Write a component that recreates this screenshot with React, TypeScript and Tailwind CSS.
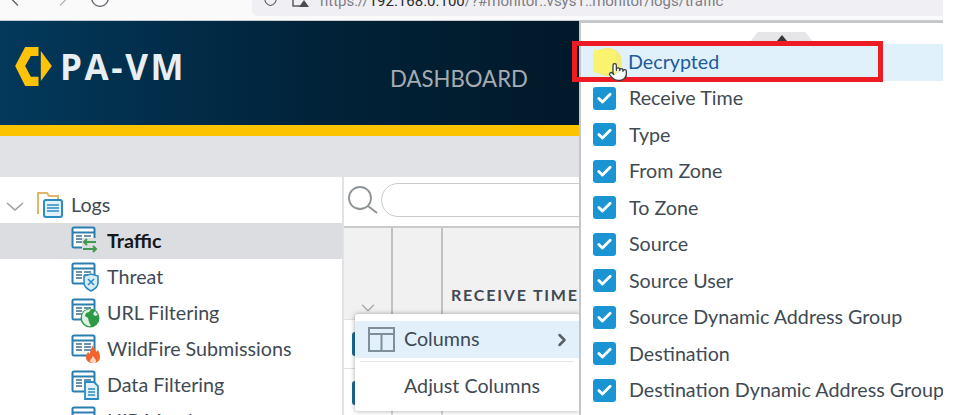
import React from 'react';
import { ChevronLeft, ChevronRight, ChevronDown, Check, Circle, Shield, Pointer } from 'lucide-react';

const columns = [
  'Receive Time',
  'Type',
  'From Zone',
  'To Zone',
  'Source',
  'Source User',
  'Source Dynamic Address Group',
  'Destination',
  'Destination Dynamic Address Group',
];

const LogIcon: React.FC<{ children?: React.ReactNode }> = ({ children }) => (
  <svg width="30" height="30" viewBox="0 0 30 30" className="shrink-0" fill="none">
    <rect x="1.5" y="1.5" width="22" height="20" rx="1.5" fill="#fff" stroke="#2b7fb0" strokeWidth="2" />
    <path d="M2 6.5h21" stroke="#2b7fb0" strokeWidth="2" />
    <path d="M5 10h6M5 13h6M5 16h6M13 10h7M13 13h7M13 16h7" stroke="#3d6f90" strokeWidth="1.6" />
    {children}
  </svg>
);

const navItems: { label: string; active?: boolean; badge: React.ReactNode }[] = [
  {
    label: 'Traffic',
    active: true,
    badge: (
      <g>
        <rect x="11" y="12" width="15" height="16" fill="#dcdde0" />
        <g stroke="#3f9b4d" strokeWidth="2" fill="none">
          <path d="M25 16H13M16 13l-3 3 3 3" />
          <path d="M12 23h13M22 20l3 3-3 3" />
        </g>
      </g>
    ),
  },
  {
    label: 'Threat',
    badge: (
      <g>
        <path d="M13 14l7-2 7 2v7c0 3-3 6-7 8-4-2-7-5-7-8z" fill="#d8ecf7" stroke="#2b8cc4" strokeWidth="1.6" />
        <path d="M17 17l6 6M23 17l-6 6" stroke="#2b8cc4" strokeWidth="1.6" />
      </g>
    ),
  },
  {
    label: 'URL Filtering',
    badge: (
      <g>
        <circle cx="19" cy="20" r="9.5" fill="#2f9a45" />
        <path d="M12 15c2-3 5-4 8-4l-2 3-3 1-1 3 3 2 1 4 2 4c-4 1-9-3-9-8 0-2 0-3 1-5zM24 13l3 4-3 1-2-2z" fill="#dff0e3" />
      </g>
    ),
  },
  {
    label: 'WildFire Submissions',
    badge: (
      <g>
        <path d="M21 11c1 3 4 4 4 7l2-2c1.500 3 2 5 2 7 0 4-3 6-7 6s-7-2-7-6c0-2 1-3 2-5l2 2c0-4 2-5 2-9z" fill="#f0642d" />
        <path d="M22 22c1 2 3 3 3 5s-1 2-3 2-3-1-3-2 2-3 3-5z" fill="#fbd6c4" />
      </g>
    ),
  },
  {
    label: 'Data Filtering',
    badge: (
      <g>
        <path d="M14 12h9l4 4v13H14z" fill="#e3f1fa" stroke="#2b8cc4" strokeWidth="1.8" />
        <path d="M17 19h7M17 22h7M17 25h7" stroke="#2b8cc4" strokeWidth="1.4" />
      </g>
    ),
  },
  { label: 'HIP Match', badge: null },
];

const Checkbox: React.FC = () => (
  <span className="flex h-[23px] w-[23px] shrink-0 items-center justify-center rounded-[3px] bg-[#1a94d2]">
    <Check size={17} strokeWidth={4} className="text-white" />
  </span>
);

const TableRow: React.FC = () => (
  <div className="flex h-[49px] border-t border-[#dfe0e2]">
    <div className="flex w-[49px] items-center border-r-2 border-[#d5d6d8] pl-[8px]">
      <span className="h-[24px] w-[23px] rounded-[3px] bg-[#1d6a96]" />
    </div>
    <div className="w-[50px] border-r-2 border-[#d5d6d8]" />
  </div>
);

const App: React.FC = () => {
  return (
    <div className="relative h-[415px] w-[958px] overflow-hidden bg-white font-['Lato',sans-serif] text-[#3f4a52]">
      <div className="flex h-[20px] w-[943px] overflow-hidden bg-[#fafafb]">
        <div className="flex h-[20px] w-[252px] items-start pl-[5px] text-[#5b5b66]">
          <ChevronLeft size={20} strokeWidth={1.5} className="-mt-[10px]" />
          <ChevronRight size={20} strokeWidth={1.5} className="-mt-[10px] ml-[28px] text-[#b4b4ba]" />
          <Circle size={20} strokeWidth={1.5} className="-mt-[12px] ml-[17px]" />
        </div>
        <div className="flex h-[16px] flex-1 items-start rounded-bl-[6px] bg-[#f0f0f4] pl-[10px] font-['Roboto',sans-serif] text-[15px] text-[#7d7d85]">
          <Shield size={17} strokeWidth={1.5} className="-mt-[10px] text-[#5b5b66]" />
          <svg width="17" height="7" viewBox="0 0 17 7" className="ml-[13px]">
            <path d="M1 0v6h7" fill="none" stroke="#5b5b66" strokeWidth="1.5" />
            <path d="M12 0l5 7H7z" fill="#4a4a50" />
          </svg>
          <span className="-mt-[10px] ml-[11px] whitespace-nowrap">
            https://<span className="text-[#2a2a2e]">192.168.0.100</span>/?#monitor::vsys1::monitor/logs/traffic
          </span>
        </div>
      </div>

      <div className="flex h-[105px] w-[943px] items-center border-t border-[#c9ccd0] bg-gradient-to-r from-[#03395c] via-[#012238] via-35% to-[#010d16]">
        <div className="flex w-[390px] items-center pb-[13px] pl-[15px]">
          <svg width="37" height="39" viewBox="45 143 110 117" fill="#fcc30a">
            <path d="M75 143h40v27H92l-17 30 17 32h23v28H75l-30-60z" />
            <path d="M122 155l33 45-33 45z" />
          </svg>
          <span className="ml-[8px] font-['Open_Sans',sans-serif] text-[35px] leading-none font-bold tracking-[2.6px] text-[#e8eef2]">
            PA-VM
          </span>
        </div>
        <span className="mt-[12px] text-[22.2px] text-[#a4acb2]">DASHBOARD</span>
      </div>
      <div className="h-[11px] w-[943px] bg-[#fcc400]" />
      <div className="h-[41px] w-[943px] bg-[#e1e2e5]" />

      <div className="flex h-[238px] w-[943px]">
        <aside className="w-[342px] shrink-0 bg-white pt-[10px]">
          <div className="flex h-[36px] items-center pl-[6px] text-[19.7px]">
            <svg width="18" height="9" viewBox="0 0 18 9" fill="none" stroke="#9aa1a6" strokeWidth="1.6" className="mt-[2px]">
              <path d="M1 1l8 7 8-7" />
            </svg>
            <svg width="28" height="30" viewBox="0 0 28 30" className="ml-[12px]" fill="none">
              <path d="M2 24V3h9l2 3h9v4" stroke="#e3b566" strokeWidth="2" fill="#fff" />
              <rect x="8" y="10" width="18" height="17" rx="2" fill="#e3f1fa" stroke="#2b8cc4" strokeWidth="2" />
              <path d="M11 15h12M11 18h12M11 21h12" stroke="#2b8cc4" strokeWidth="1.6" />
            </svg>
            <span className="ml-[7px]">Logs</span>
          </div>
          {navItems.map((item) => (
            <div
              key={item.label}
              className={`flex h-[36px] items-center pl-[71px] text-[19.7px] ${item.active ? 'bg-[#dcdde0] font-bold text-[#14181b]' : ''}`}
            >
              <LogIcon>{item.badge}</LogIcon>
              <span className="ml-[6px]">{item.label}</span>
            </div>
          ))}
        </aside>

        <main className="relative flex-1 overflow-hidden border-l-2 border-[#e1e2e5]">
          <div className="flex h-[51px] items-center gap-[3px] border-b-2 border-[#c8cacc] pb-[3px] pl-[3px]">
            <svg width="31" height="28" viewBox="0 0 31 28" fill="none" stroke="#8c9296" strokeWidth="1.8" className="shrink-0">
              <circle cx="13" cy="12" r="11" />
              <path d="M21 20l9 7" />
            </svg>
            <div className="h-[34px] flex-1 rounded-l-[17px] border border-[#c8cacc] bg-white" />
          </div>
          <div className="flex h-[91px] bg-[#f1f1f1]">
            <div className="flex w-[49px] items-end justify-center border-r-2 border-[#bfc1c3]">
              <ChevronDown size={22} strokeWidth={1.5} className="text-[#a5a9ac]" />
            </div>
            <div className="w-[50px] border-r-2 border-[#bfc1c3]" />
            <div className="flex items-end pb-[12px] pl-[8px] text-[16px] font-bold tracking-[1.8px] whitespace-nowrap text-[#3f4a52]">
              RECEIVE TIME
            </div>
          </div>
          <TableRow />
          <TableRow />
          {/* context menu over the table */}
          <div className="absolute top-[137px] left-[11px] w-[225px] rounded-[3px] bg-white pt-[7px] pb-[4px] shadow-[0_0_5px_rgba(0,0,0,0.35)]">
            <div className="flex h-[37px] items-center bg-[#e1f0fa] pr-[8px] pl-[13px] text-[19.7px]">
              <svg width="27" height="25" viewBox="0 0 27 25" fill="none" stroke="#7f8f99" strokeWidth="2">
                <rect x="1" y="1" width="25" height="23" />
                <path d="M1 7h25M13.500 7v17" />
              </svg>
              <span className="mb-[2px] ml-[9px] flex-1">Columns</span>
              <ChevronRight size={20} strokeWidth={3} className="text-[#5a6066]" />
            </div>
            <div className="mx-[6px] my-[3px] h-px bg-[#e3e5e6]" />
            <div className="flex h-[42px] items-center pl-[49px] text-[19.7px]">Adjust Columns</div>
          </div>
        </main>
      </div>

      {/* columns dropdown over the page */}
      <div className="absolute top-[21px] left-[579px] h-[394px] w-[364px] overflow-hidden border-t-2 border-l-2 border-[#c4c6c8] bg-white pt-[21px]">
        <div className="absolute top-[9px] left-[169px] h-[10px] w-[63px] bg-[#e6e6e8] [clip-path:polygon(12%_0,88%_0,100%_100%,0_100%)]">
          <div className="mx-auto mt-[3px] h-0 w-0 border-x-[5px] border-b-[6px] border-x-transparent border-b-[#33383c]" />
        </div>
        <div className="flex h-[37px] items-center bg-[#e1f1fb] pb-[2px] pl-[12px] text-[19.7px] text-[#1c5b9c]">
          <span className="h-[28px] w-[29px] shrink-0 rounded-full bg-[#f3ed78]">
            <span className="mt-[2px] block h-[23px] w-[23px] rounded-[3px] bg-[#faf36f]" />
          </span>
          <span className="ml-[6px]">Decrypted</span>
        </div>
        {columns.map((name) => (
          <div key={name} className="flex h-[36.5px] items-center pb-[2px] pl-[12px] text-[19.7px] whitespace-nowrap">
            <Checkbox />
            <span className="ml-[13px]">{name}</span>
          </div>
        ))}
      </div>

      {/* red annotation and cursor over the dropdown */}
      <div className="pointer-events-none absolute top-[41px] left-[572px] h-[41px] w-[311px] border-[5px] border-[#ed1c24]" />
      <Pointer size={20} strokeWidth={1.5} className="absolute top-[62px] left-[608px] fill-white text-[#33383c]" />
    </div>
  );
};

export default App;
